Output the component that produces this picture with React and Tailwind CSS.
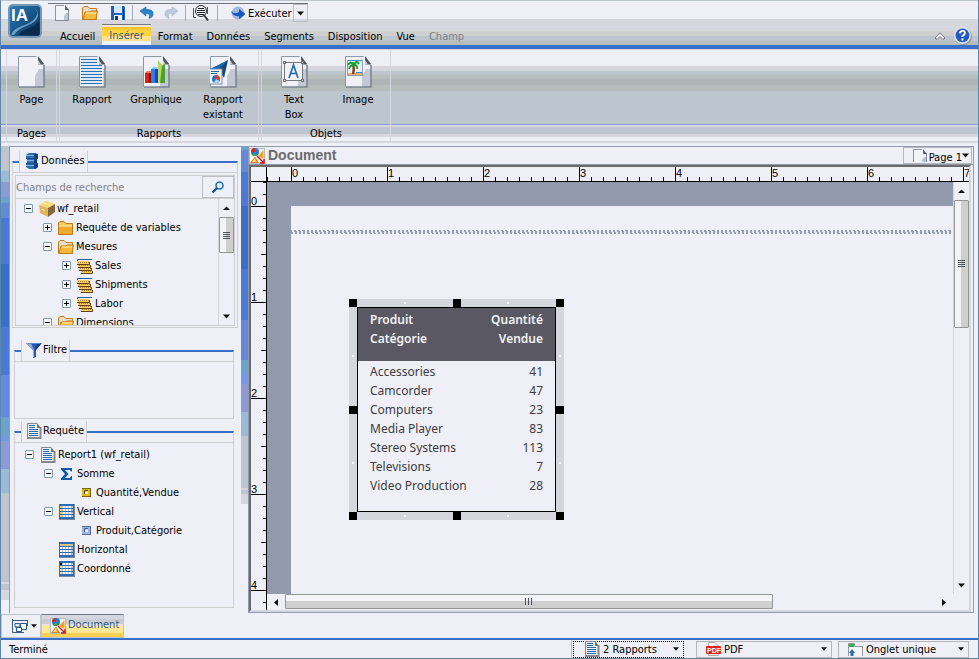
import React, { useEffect, useRef, useState } from "react";

const tabs = ["Accueil", "Insérer", "Format", "Données", "Segments", "Disposition", "Vue", "Champ"];

const reportRows = [
  ["Accessories", 41],
  ["Camcorder", 47],
  ["Computers", 23],
  ["Media Player", 83],
  ["Stereo Systems", 113],
  ["Televisions", 7],
  ["Video Production", 28],
];

const dataTree = [
  { label: "wf_retail", level: 0, icon: "cube", open: true },
  { label: "Requête de variables", level: 1, icon: "folder", open: false },
  { label: "Mesures", level: 1, icon: "folderOpen", open: true },
  { label: "Sales", level: 2, icon: "measure", open: false },
  { label: "Shipments", level: 2, icon: "measure", open: false },
  { label: "Labor", level: 2, icon: "measure", open: false },
  { label: "Dimensions", level: 1, icon: "folderOpen", open: true },
];

const queryTree = [
  { label: "Report1 (wf_retail)", level: 0, icon: "report", open: true },
  { label: "Somme", level: 1, icon: "sigma", open: true },
  { label: "Quantité,Vendue", level: 2, icon: "fieldYellow" },
  { label: "Vertical", level: 1, icon: "gridVertical", open: true },
  { label: "Produit,Catégorie", level: 2, icon: "fieldBlue" },
  { label: "Horizontal", level: 1, icon: "gridHorizontal" },
  { label: "Coordonné", level: 1, icon: "gridCoord" },
];

const indent = ["pl-0", "pl-[19px]", "pl-[38px]"];

/* ---------- icons ---------- */

const PageShape = ({ children, className = "w-[27px] h-8" }) => (
  <svg viewBox="0 0 27 32" className={className} aria-hidden="true">
    <path d="M1 1H19L26 9V31H1Z" fill="#f1f1f8" />
    <path d="M17 31V20L21 13H26V31Z" fill="#c3c9d4" />
    <path d="M.5 31V.5H18.5" fill="none" stroke="#8d97a8" />
    <path d="M1 31H26V9" fill="none" stroke="#7d8594" strokeWidth="1.6" />
    <path d="M20 0L26.5 8.5H20Z" fill="#4e545e" />
    <path d="M20 4L23 8.5H20Z" fill="#c8ccd4" />
    {children}
  </svg>
);

const SmallPage = () => (
  <svg viewBox="0 0 14 16" className="h-4 w-[14px]" aria-hidden="true">
    <path d="M0 0H10L13 4V16H0Z" fill="#f3f4fa" />
    <path d="M9 16V11L11 8H13V16Z" fill="#bcc4d0" />
    <path d="M.5 16V.5H9" fill="none" stroke="#9096a0" />
    <path d="M0 15.5H13.5V4" fill="none" stroke="#858b96" />
    <path d="M10 0L14 5H10Z" fill="#5e646e" />
  </svg>
);

const ReportPage = ({ className }) => (
  <PageShape className={className}>
    <path d="M2 2H18V10H24V30H2Z" fill="#f4f5fb" />
    {[3.5, 6.5, 9.5, 12.5, 15.5, 18.5, 21.5, 24.5, 27.5].map((y) => (
      <path key={y} d={`M2 ${y}H${y < 9 ? 18 : 23}`} stroke="#2474b8" strokeWidth="1.2" />
    ))}
  </PageShape>
);

const SmallReport = () => (
  <svg viewBox="0 0 16 16" className="size-4" aria-hidden="true">
    <path d="M1 0H11L15 4V16H1Z" fill="#f3f4fa" />
    <path d="M1.5 15V.5H11" fill="none" stroke="#84898c" />
    <path d="M1 15H14.5V4" fill="none" stroke="#84898c" strokeWidth="2" />
    <path d="M11 0L15 5H11Z" fill="#6f7478" />
    <path d="M3 2.5H9M3 4.5H9M3 6.5H12M3 8.5H12M3 10.5H12M3 12.5H12" stroke="#1f69b3" />
  </svg>
);

const GraphPage = () => (
  <PageShape>
    <rect x="2" y="17" width="6" height="10" fill="#d8210f" />
    <path d="M2 17L4 15H9L8 17Z" fill="#f0784a" />
    <rect x="6" y="17" width="2" height="10" fill="#7c1008" />
    <rect x="8" y="13" width="6" height="14" fill="#2f7ef0" />
    <path d="M8 13L10 11H15L14 13Z" fill="#8fc4ff" />
    <rect x="12" y="13" width="3" height="14" fill="#1d44c0" />
    <path d="M15 4L20 10L22 8V27H15Z" fill="#b5d85c" />
    <path d="M19 10L22 8V27H17Z" fill="#4aa232" />
  </PageShape>
);

const ExistingPage = () => (
  <PageShape>
    <path d="M0 13L18 4L12 20L9 13Z" fill="#1d67ae" />
    <path d="M9 13L18 4L14 22Z" fill="#17466f" />
    <rect x="-1" y="13" width="13" height="15" fill="#f3f4fa" stroke="#6d8fb4" />
    <path d="M1 15.5H9M1 17.5H7" stroke="#1f69b3" />
    <circle cx="6" cy="23" r="4" fill="#2a6fd6" />
    <path d="M6 23V19A4 4 0 0 1 9.5 25Z" fill="#e2401c" />
    <path d="M6 23L9.5 25A4 4 0 0 1 4 26.5Z" fill="#a8d8ea" />
  </PageShape>
);

const TextPage = () => (
  <PageShape>
    <rect x="3.5" y="6.5" width="18" height="18" fill="#f1f1f8" stroke="#74787c" />
    {[[2.5, 5.5], [20.5, 5.5], [2.5, 23.5], [20.5, 23.5]].map(([x, y]) => (
      <rect key={`${x}-${y}`} x={x} y={y} width="2" height="2" fill="#fff" stroke="#74787c" />
    ))}
    <path d="M8 22L12.5 9L17 22M9.5 17.5H15.5" fill="none" stroke="#1f69b3" strokeWidth="1.6" />
  </PageShape>
);

const ImagePage = () => (
  <PageShape>
    <rect x="2.5" y="4.5" width="15" height="15" fill="#e9eef8" stroke="#8ba0b4" />
    <rect x="3" y="4" width="14" height="1" fill="#3f8fd0" />
    <path d="M3 17H17V19H3Z" fill="#e0b060" />
    <path d="M11 16H17V17H11Z" fill="#3f8fd0" />
    <path d="M8 18Q9.5 12 8 9" fill="none" stroke="#8a3a12" strokeWidth="2.4" />
    <path d="M3 9Q5 5 9 8Q12 4 14 8M4 13Q5 9 9 9Q13 9 12 13M5 6L9 9L12 5" fill="none" stroke="#19a030" strokeWidth="1.8" />
  </PageShape>
);

const Logo = () => (
  <svg viewBox="0 0 34 34" className="size-[34px]" aria-hidden="true">
    <defs>
      <linearGradient id="logo" x1="0" y1="0" x2="1" y2="1">
        <stop offset="0" stopColor="#2f7fb8" />
        <stop offset=".55" stopColor="#145388" />
        <stop offset="1" stopColor="#0b2a4c" />
      </linearGradient>
    </defs>
    <rect x="1" y="1" width="32" height="32" rx="4" fill="url(#logo)" stroke="#7797b3" strokeWidth="2" />
    <path d="M24 3Q32 7 28 13Q24 19 14 22Q5 25 3 31H6Q10 25 18 22Q29 18 30 12Q31 6 24 3Z" fill="#8fb8d4" opacity=".75" />
    <path d="M31 17Q28 22 19 25Q12 27 11 31H31Z" fill="#0b2b4e" />
    <text x="3" y="17" fontFamily="Liberation Sans, sans-serif" fontWeight="bold" fontSize="17" fill="#fff">IA</text>
  </svg>
);

const FolderIcon = ({ open }) => (
  <svg viewBox="0 0 16 16" className="size-4" aria-hidden="true">
    <path d="M.5 14.5V3L2 1.5H6L8 3.5H14.5V14.5Z" fill={open ? "#e9dcc4" : "#f4c558"} stroke="#c47a1a" />
    {open ? (
      <path d="M3 7H8L9 6H15.5L14 14.5H1Z" fill="#f5b93c" stroke="#c47a1a" />
    ) : (
      <path d="M1 6H14V14H1Z" fill="#f0ab2c" />
    )}
    <path d={open ? "M4 8H14" : "M1 6H14"} stroke="#fff0b8" />
  </svg>
);

const GridIcon = ({ mode }) => (
  <svg viewBox="0 0 16 16" className="size-4" aria-hidden="true">
    <rect x="0" y="0" width="16" height="16" fill="#7c8a98" />
    <rect x="0" y="0" width="15" height="15" fill="#2a6db4" />
    {[0, 1, 2, 3].map((r) =>
      [0, 1, 2, 3].map((c) => {
        let fill = "#f6f7fc";
        if (mode === "vertical" && c === 0) fill = "#f5cc3c";
        if (mode === "horizontal" && r === 0) fill = "#f5cc3c";
        if (mode === "coord" && c === 0) fill = r === 0 ? "#000" : "#f5dc90";
        return (
          <g key={`${r}${c}`}>
            <rect x={1 + c * 3} y={2 + r * 3} width="4" height="2" fill="#b4bccf" />
            <rect x={1 + c * 3} y={2 + r * 3} width="2" height="2" fill={fill} />
          </g>
        );
      })
    )}
  </svg>
);

const icons = {
  cube: (
    <svg viewBox="0 0 16 16" className="size-4" aria-hidden="true">
      <path d="M0 4L7 0L16 3L9 7Z" fill="#f3d873" />
      <path d="M0 4L9 7V16L1 12Z" fill="#e2b65c" />
      <path d="M9 7L16 3V11L9 16Z" fill="#86663a" />
      <path d="M5 2L12 5M3 8L6 10" stroke="#fff0b0" />
    </svg>
  ),
  folder: <FolderIcon />,
  folderOpen: <FolderIcon open />,
  measure: (
    <svg viewBox="0 0 16 16" className="size-4" aria-hidden="true">
      <path d="M.5 4V1.5H15" fill="none" stroke="#1d5c98" />
      <path d="M0 3H12V6H0ZM1 6H13V9H1ZM2 9H14V12H2ZM4 12H15V15H4Z" fill="#f5cf62" />
      <path d="M0 6.5H12.5V4M1 9.5H13.5V7M2 12.5H14.5V10M4 15.5H15.5V13" fill="none" stroke="#664014" />
      <path d="M1 4.5H12M2 7.5H13M3 10.5H14M5 13.5H15" stroke="#a87a2c" strokeDasharray="1 1" />
    </svg>
  ),
  report: <SmallReport />,
  sigma: (
    <svg viewBox="0 0 16 16" className="size-4" aria-hidden="true">
      <path d="M2 2H13V5.5H12L11 4H6L9.5 8L6 12H11L12 10H13V14H2V12.5L6 8L2 3.5Z" fill="#0b5cab" />
    </svg>
  ),
  fieldYellow: (
    <svg viewBox="0 0 9 9" className="size-[9px]" aria-hidden="true">
      <path d="M0 0H9V9H0Z" fill="#7b6314" />
      <path d="M0 1H8V8H0Z" fill="#dcb926" />
      <path d="M3 4L6 3V6H3Z" fill="#fff29c" />
      <path d="M2.5 6V2.5H6" fill="none" stroke="#5a4708" />
    </svg>
  ),
  fieldBlue: (
    <svg viewBox="0 0 9 9" className="size-[9px]" aria-hidden="true">
      <path d="M0 0H9V9H0Z" fill="#56699a" />
      <path d="M0 1H8V8H0Z" fill="#9db6e0" />
      <path d="M3 4L6 3V6H3Z" fill="#e4eefc" />
      <path d="M2.5 6V2.5H6" fill="none" stroke="#4a5f94" />
    </svg>
  ),
  gridVertical: <GridIcon mode="vertical" />,
  gridHorizontal: <GridIcon mode="horizontal" />,
  gridCoord: <GridIcon mode="coord" />,
};

const DatabaseIcon = () => (
  <svg viewBox="0 0 16 16" className="size-4" aria-hidden="true">
    <path d="M2 2L5 0H12L14 2V5L13 6V10L14 11V14L12 16H5L2 14V11L3 10V6L2 5Z" fill="#2a6db4" />
    <path d="M10 1H14V5L13 6V10L14 11V14L10 16Z" fill="#143f73" />
    <path d="M2 2.5H10M3 7.5H10M2 12.5H10" stroke="#7ab4e6" />
    <path d="M2 5.5H14M2 10.5H14" stroke="#1d4f86" />
  </svg>
);

const FunnelIcon = () => (
  <svg viewBox="0 0 16 16" className="size-4" aria-hidden="true">
    <path d="M0 1H16L10 8V15L7 16V8Z" fill="#2458c0" />
    <path d="M0 1H5L8 8V15L7 15V8Z" fill="#94a8c8" />
    <path d="M11 2H15L9 9Z" fill="#173a78" />
    <path d="M2 1.5H14" stroke="#5c86cc" />
  </svg>
);

const DocIcon = () => (
  <svg viewBox="0 0 16 16" className="size-4 shrink-0" aria-hidden="true">
    <rect x=".5" y=".5" width="15" height="15" fill="#f5f5fa" stroke="#b4b8c0" />
    <circle cx="6" cy="4" r="4" fill="#2c74d8" />
    <path d="M6 4H2A4 4 0 0 1 6 0Z" fill="#d83018" />
    <path d="M6 4L3 7A4 4 0 0 0 8 7Z" fill="#3aa64a" />
    <path d="M9 8L14.5 2V11Z" fill="#f0a41c" />
    <path d="M1 15L6 8.5L10 15Z" fill="#d48a14" />
    <path d="M3 14L6 10L7 14Z" fill="#ffdc70" />
    <path d="M8 8L15 15M15 11V15H11" fill="none" stroke="#cf1414" strokeWidth="1.4" />
  </svg>
);

const ArrowIcon = ({ dir = "down", className = "size-[7px]" }) => {
  const d = { down: "M0 1.5H7L3.5 5.5Z", up: "M0 5H7L3.5 1.5Z", left: "M5 0V7L1 3.5Z", right: "M1 0V7L5 3.5Z" }[dir];
  return (
    <svg viewBox="0 0 7 7" className={`pointer-events-none shrink-0 ${className}`} aria-hidden="true">
      <path d={d} fill="#111" />
    </svg>
  );
};

/* ---------- ribbon ---------- */

const QuickButton = ({ label, children }) => (
  <button type="button" aria-label={label} className="flex h-[18px] w-7 items-center justify-center">
    {children}
  </button>
);

const QuickBar = () => (
  <div className="flex h-[19px] w-fit items-center border-t border-[#6f737b]">
    <QuickButton label="Nouveau">
      <SmallPage />
    </QuickButton>
    <QuickButton label="Ouvrir">
      <FolderIcon open />
    </QuickButton>
    <QuickButton label="Enregistrer">
      <svg viewBox="0 0 16 16" className="size-4" aria-hidden="true">
        <path d="M1 1H14L15 2V15H1Z" fill="#1d62b8" />
        <path d="M4 1H12V8H4Z" fill="#d4e6f8" />
        <path d="M4 10H12V15H4Z" fill="#f2f4fb" />
        <path d="M5 11H8V15H5Z" fill="#173a66" />
        <path d="M13.5 4V15" stroke="#0d3c7a" />
      </svg>
    </QuickButton>
    <span className="mr-[2px] h-4 w-px bg-[#a4acbc]" />
    <button type="button" aria-label="Annuler" className="flex h-[18px] w-6 items-center justify-center">
      <svg viewBox="0 0 14 12" className="h-3 w-[14px]" aria-hidden="true">
        <path d="M0 4L6 0V2.5Q14 2 13 8Q12 11 9 11.5Q11 6 6 6.5V9Z" fill="#2785cf" stroke="#155b9c" strokeWidth=".6" />
      </svg>
    </button>
    <button type="button" aria-label="Rétablir" disabled className="flex h-[18px] w-6 items-center justify-center">
      <svg viewBox="0 0 14 12" className="h-3 w-[14px]" aria-hidden="true">
        <path d="M14 4L8 0V2.5Q0 2 1 8Q2 11 5 11.5Q3 6 8 6.5V9Z" fill="#bccbdc" stroke="#a6b6c8" strokeWidth=".6" />
      </svg>
    </button>
    <span className="ml-[2px] mr-px h-4 w-px bg-[#a4acbc]" />
    <QuickButton label="Aperçu">
      <svg viewBox="0 0 16 16" className="size-4" aria-hidden="true">
        <path d="M.5 3V12.5H3M14.5 9V2" fill="none" stroke="#555" />
        <circle cx="8" cy="6" r="5.5" fill="#f7f8fc" stroke="#20242a" />
        <path d="M5 3.5H11M4 5.5H12M4 7.5H12M5 9.5H11" stroke="#20242a" />
        <path d="M11 10L15 15.5" stroke="#383c44" strokeWidth="2" />
      </svg>
    </QuickButton>
    <span className="ml-[2px] h-4 w-px bg-[#a4acbc]" />
    <button type="button" className="ml-3 flex h-[18px] items-center gap-[2px] pr-px">
      <svg viewBox="0 0 16 14" className="h-[14px] w-4" aria-hidden="true">
        <circle cx="8" cy="7" r="6.5" fill="#9fb9e2" />
        <path d="M1 5Q5 9 9 6V3L15.5 8L9 13V10Q3 11 1 5Z" fill="#1656bd" />
      </svg>
      <span className="pt-px">Exécuter</span>
    </button>
    <button
      type="button"
      aria-label="Options d'exécution"
      className="flex h-[18px] w-[15px] items-center justify-center border border-[#b9bdc6]"
    >
      <ArrowIcon />
    </button>
  </div>
);

const RibbonButton = ({ icon, label }) => (
  <button type="button" className="flex w-16 flex-col items-center gap-1 text-center leading-[15px]">
    {icon}
    <span className="flex w-12 justify-center">{label}</span>
  </button>
);

const RibbonGroup = ({ title, children }) => (
  <section className="flex flex-col border-r border-[#d6d7de]">
    <div className="flex h-[74px] shrink-0 pt-[6px]">{children}</div>
    <h2 className="pt-[2px] text-center leading-4">{title}</h2>
  </section>
);

const Ribbon = () => (
  <div className="flex h-[93px] border-b-2 border-[#d6d7de] bg-[linear-gradient(#efeff7_16px,#d6d7de_16px_21px,#bdc5ce_21px_25px,#b5beba_25px_29px,#adb6b5_29px_35px,#b5beba_35px_41px,#bdc5ce_41px_74px,#8c9ad6_74px_75px,#d6d7de_75px_77px,#bdc5ce_77px_84px,#d6d7de_84px_87px,#efeff7_87px)] pl-[5px]">
    <div className="flex border-l border-[#d6d7de]">
      <RibbonGroup title="Pages">
        <div className="flex w-[49px] justify-center">
          <RibbonButton icon={<PageShape />} label="Page" />
        </div>
      </RibbonGroup>
      <div className="ml-[2px] flex border-l border-[#d6d7de]">
        <RibbonGroup title="Rapports">
          <RibbonButton icon={<ReportPage />} label="Rapport" />
          <RibbonButton icon={<GraphPage />} label="Graphique" />
          <div className="flex w-[70px] justify-center">
            <RibbonButton icon={<ExistingPage />} label="Rapport existant" />
          </div>
        </RibbonGroup>
      </div>
      <div className="ml-[2px] flex border-l border-[#d6d7de]">
        <RibbonGroup title="Objets">
          <RibbonButton icon={<TextPage />} label={<>Text<br />Box</>} />
          <RibbonButton icon={<ImagePage />} label="Image" />
        </RibbonGroup>
      </div>
    </div>
  </div>
);

const Header = ({ active, onSelect }) => (
  <header className="flex h-[49px] border-t border-b-4 border-t-[#bdc5ce] border-b-[#396fc6] bg-[linear-gradient(#efeff7_18px,#d6d7de_18px_30px,#cecfce_30px_35px,#bdc5ce_35px_40px,#b5beba_40px)] pl-[7px]">
    <div className="pt-[3px]">
      <Logo />
    </div>
    <div className="flex flex-1 flex-col justify-between pl-[6px] pt-[2px]">
      <QuickBar />
      <nav className="flex h-[21px] pl-[5px]">
        {tabs.map((tab) => (
          <button
            key={tab}
            type="button"
            onClick={() => onSelect(tab)}
            disabled={tab === "Champ"}
            className={
              tab === active
                ? "border-t border-[#73798c] bg-[linear-gradient(#f2ead0_2px,#f7c631_2px_5px,#ffd340_5px_11px,#ffe38c_11px_16px,#efeff7_16px)] px-[7px] pt-px text-[#31598c]"
                : "px-[7px] pt-1 disabled:text-[#7b7f88]"
            }
          >
            {tab}
          </button>
        ))}
      </nav>
    </div>
    <div className="flex items-end gap-2 pr-[6px]">
      <button type="button" aria-label="Réduire le ruban" className="pb-1">
        <svg viewBox="0 0 12 10" className="h-[10px] w-3" aria-hidden="true">
          <path d="M1 7L6 2L11 7L9 8.5L6 5.5L3 8.5Z" fill="#f4f4fa" stroke="#62666e" strokeWidth=".9" />
        </svg>
      </button>
      <button type="button" aria-label="Aide">
        <svg viewBox="0 0 17 17" className="size-[18px]" aria-hidden="true">
          <circle cx="9" cy="9" r="8" fill="#8d949c" />
          <circle cx="8" cy="8" r="8" fill="#dfe5f0" />
          <circle cx="8" cy="8" r="6.5" fill="#2259c4" />
          <path d="M5.5 6Q6 3.5 8.5 3.7Q11 4.3 10 6.7L8 8.5V9.5" fill="none" stroke="#fff" strokeWidth="1.8" />
          <rect x="7" y="10.8" width="2" height="2" fill="#fff" />
        </svg>
      </button>
    </div>
  </header>
);

/* ---------- left side ---------- */

const GroupBox = ({ icon, title, className, bodyClass, children }) => (
  <section className={`flex flex-col ${className}`}>
    <div className="flex h-[21px] items-end">
      <span className="h-[11px] w-[7px] border-l border-t-2 border-l-[#cecfce] border-t-[#396fc6]" />
      <h2 className="flex h-[21px] items-center gap-px border-x border-[#cecfce] pl-1 pr-[2px] pb-[2px]">
        {icon}
        {title}
      </h2>
      <span className="h-[11px] flex-1 border-r border-t-2 border-r-[#cecfce] border-t-[#396fc6]" />
    </div>
    <div className={`border border-[#cecfce] ${bodyClass}`}>{children}</div>
  </section>
);

const Expander = ({ open, label }) => (
  <button
    type="button"
    aria-label={label}
    aria-expanded={open}
    className="flex size-[9px] shrink-0 items-center justify-center rounded-[1px] border border-[#7b9aad] bg-[#f7f7fa]"
  >
    <svg viewBox="0 0 7 7" className="size-[7px]" aria-hidden="true">
      <path d={open ? "M1 3.5H6" : "M1 3.5H6M3.5 1V6"} stroke="#000" />
    </svg>
  </button>
);

const Tree = ({ items, className }) => (
  <ul className={className}>
    {items.map((item) => (
      <li key={item.label} className={`flex h-[19px] items-center whitespace-nowrap ${indent[item.level]}`}>
        {item.open === undefined ? <span className="w-[9px] shrink-0" /> : <Expander open={item.open} label={item.label} />}
        <span className="ml-[6px] mr-[2px] flex w-4 shrink-0 justify-center">{icons[item.icon]}</span>
        {item.label}
      </li>
    ))}
  </ul>
);

const ScrollButton = ({ dir, label, className }) => (
  <button type="button" aria-label={label} className={`flex shrink-0 items-center justify-center ${className}`}>
    <ArrowIcon dir={dir} />
  </button>
);

const VerticalThumb = ({ className }) => (
  <div
    className={`flex flex-col items-center justify-center gap-px rounded-[1px] border border-[#949694] bg-[linear-gradient(to_right,#f3f3f8_50%,#cecfce_50%)] ${className}`}
  >
    <span className="h-px w-[7px] bg-[#4c525c]" />
    <span className="h-px w-[7px] bg-[#4c525c]" />
    <span className="h-px w-[7px] bg-[#4c525c]" />
    <span className="h-px w-[7px] bg-[#4c525c]" />
  </div>
);

const DataPanel = () => (
  <GroupBox icon={<DatabaseIcon />} title="Données" className="mr-[3px] ml-[2px]" bodyClass="p-[2px] pb-[1px]">
    <div className="flex h-6 border border-[#cecfce]">
      <input
        type="text"
        aria-label="Champs de recherche"
        placeholder="Champs de recherche"
        className="min-w-0 flex-1 bg-transparent pt-px placeholder:text-[#7e8288] outline-none"
      />
      <button type="button" aria-label="Rechercher" className="flex w-8 items-center justify-center border border-[#bdbfc0]">
        <svg viewBox="0 0 14 13" className="h-[13px] w-[14px]" aria-hidden="true">
          <circle cx="8.5" cy="4.5" r="3.5" fill="#e6f0fc" stroke="#2170bd" strokeWidth="1.6" />
          <path d="M6 7L1.5 11.5" stroke="#1b4f88" strokeWidth="2.4" />
        </svg>
      </button>
    </div>
    <div className="flex h-[127px] border border-t-0 border-[#cecfce]">
      <Tree items={dataTree} className="flex-1 overflow-hidden pl-2" />
      <div className="flex w-4 flex-col border-l border-[#d6d7de]">
        <ScrollButton dir="up" label="Défiler vers le haut" className="h-[18px]" />
        <VerticalThumb className="h-9" />
        <div className="flex-1" />
        <ScrollButton dir="down" label="Défiler vers le bas" className="h-[18px]" />
      </div>
    </div>
  </GroupBox>
);

const SidePanel = () => (
  <aside className="flex w-[232px] shrink-0 flex-col border-l border-t border-[#949aad] pt-1">
    <DataPanel />
    <GroupBox icon={<FunnelIcon />} title="Filtre" className="ml-1 mr-[7px] mt-3" bodyClass="h-[58px]" />
    <GroupBox icon={<SmallReport />} title="Requête" className="mt-[2px] mb-[5px] ml-1 mr-[7px] flex-1" bodyClass="flex-1">
      <Tree items={queryTree} className="pl-[10px] pt-[2px]" />
    </GroupBox>
  </aside>
);

/* ---------- document ---------- */

const INCH = 96;

// how many inches of ruler fit in the element
const useRulerLength = (side, origin) => {
  const ref = useRef(null);
  const [count, setCount] = useState(1);

  useEffect(() => {
    const observer = new ResizeObserver(([entry]) => {
      setCount(Math.ceil((entry.contentRect[side] - origin) / INCH));
    });
    observer.observe(ref.current);
    return () => observer.disconnect();
  }, [side, origin]);

  return {
    ref,
    units: Array.from({ length: count }, (_, i) => i),
    ticks: Array.from({ length: (count + 1) * 8 }, (_, i) => i - 2),
  };
};

const HorizontalRuler = () => {
  const { ref, units, ticks } = useRulerLength("width", 42);
  return (
    <svg ref={ref} className="h-[15px] w-full border-b border-black" fontFamily="Liberation Sans, sans-serif" fontSize="11" aria-hidden="true">
      {ticks.map((t) => (
        <path key={t} d={`M${40.5 + t * 12} ${t % 8 === 0 ? 0 : 10}V14`} stroke="#000" />
      ))}
      <path d="M15.5 0V14" stroke="#000" />
      {units.map((u) => (
        <text key={u} x={41 + u * INCH} y="10">{u}</text>
      ))}
    </svg>
  );
};

const VerticalRuler = () => {
  const { ref, units, ticks } = useRulerLength("height", 24);
  return (
    <svg ref={ref} className="w-4 shrink-0 border-r border-black" fontFamily="Liberation Sans, sans-serif" fontSize="11" aria-hidden="true">
      {ticks.map((t) => (
        <path key={t} d={`M${t % 8 === 0 ? 0 : t % 4 === 0 ? 10 : 12} ${24.5 + t * 12}H16`} stroke="#000" />
      ))}
      {units.map((u) => (
        <text key={u} x="0" y={23 + u * INCH}>{u}</text>
      ))}
    </svg>
  );
};

const Report = () => (
  <div className="absolute left-[82px] top-[117px] w-[215px] bg-[#d6d7de] p-2">
    <table className="w-full border border-black bg-[#efeff7] font-['Noto_Sans',sans-serif] text-xs text-[#3c3c40]">
      <thead className="bg-[#5a5963] text-[#f2f2f6]">
        <tr className="h-[53px] align-top leading-[19px]">
          <th className="pl-3 pt-[2px] text-left font-semibold">Produit<br />Catégorie</th>
          <th className="pr-3 pt-[2px] text-right font-semibold">Quantité<br />Vendue</th>
        </tr>
      </thead>
      <tbody className="leading-[19px]">
        <tr className="h-px"><td colSpan="2" /></tr>
        {reportRows.map(([name, qty]) => (
          <tr key={name}>
            <td className="pl-3">{name}</td>
            <td className="pr-3 text-right">{qty}</td>
          </tr>
        ))}
        <tr className="h-[17px]"><td colSpan="2" /></tr>
      </tbody>
    </table>
    <span className="absolute left-0 top-0 size-2 bg-black" />
    <span className="absolute left-[104px] top-0 size-2 bg-black" />
    <span className="absolute right-0 top-0 size-2 bg-black" />
    <span className="absolute left-0 top-[107px] size-2 bg-black" />
    <span className="absolute right-0 top-[107px] size-2 bg-black" />
    <span className="absolute bottom-0 left-0 size-2 bg-black" />
    <span className="absolute bottom-0 left-[104px] size-2 bg-black" />
    <span className="absolute bottom-0 right-0 size-2 bg-black" />
    <span className="absolute left-[55px] top-[3px] size-[2px] bg-[#f7f7fa]" />
    <span className="absolute right-[55px] top-[3px] size-[2px] bg-[#f7f7fa]" />
    <span className="absolute bottom-[3px] left-[55px] size-[2px] bg-[#f7f7fa]" />
    <span className="absolute bottom-[3px] right-[55px] size-[2px] bg-[#f7f7fa]" />
    <span className="absolute left-[3px] top-14 size-[2px] bg-[#f7f7fa]" />
    <span className="absolute right-[3px] top-14 size-[2px] bg-[#f7f7fa]" />
    <span className="absolute bottom-14 left-[3px] size-[2px] bg-[#f7f7fa]" />
    <span className="absolute bottom-14 right-[3px] size-[2px] bg-[#f7f7fa]" />
  </div>
);

const DocumentPanel = () => (
  <main className="mr-1 flex min-w-0 flex-1 flex-col border border-[#949aad]">
    <div className="flex h-[18px] items-center border-b border-[#949aad]">
      <DocIcon />
      <h1 className="flex-1 pb-[2px] pl-[3px] font-['Liberation_Sans',Arial,sans-serif] text-sm/4 font-bold text-[#6b6b6b]">Document</h1>
      <button
        type="button"
        aria-haspopup="menu"
        className="mr-px flex h-[17px] w-[69px] items-center justify-end border border-[#b5b7bd] pr-[2px]"
      >
        <span className="mr-[2px] h-[13px] overflow-hidden"><SmallPage /></span>
        <span className="pt-1">Page 1</span>
        <ArrowIcon />
      </button>
    </div>
    <div className="mr-[2px] flex flex-1 flex-col border-2 border-b-[#d6d7de] border-l-[#6b6b6b] border-r-[#d6d7de] border-t-[#6b6b6b]">
      <HorizontalRuler />
      <div className="flex flex-1">
        <VerticalRuler />
        <div className="flex min-w-0 flex-1 flex-col">
          <div className="flex flex-1">
            <div className="relative flex flex-1 overflow-hidden bg-[#949aad] pl-6 pt-6">
              <div className="flex-1 bg-[#efeff7] pt-6">
                <div className="h-1 bg-[repeating-linear-gradient(75deg,#949aad_0_2px,#efeff7_2px_4px)]" />
              </div>
              <Report />
            </div>
            <div className="flex w-4 flex-col border-l border-[#d6d7de]">
              <ScrollButton dir="up" label="Défiler vers le haut" className="h-[18px]" />
              <div className="flex-1">
                <VerticalThumb className="h-[34%]" />
              </div>
              <ScrollButton dir="down" label="Défiler vers le bas" className="h-[18px]" />
            </div>
          </div>
          <div className="flex h-4">
            <ScrollButton dir="left" label="Défiler à gauche" className="w-[18px]" />
            <div className="flex-1">
              <div className="flex h-[15px] w-3/4 items-center justify-center gap-[2px] rounded-[1px] border border-[#949694] bg-[linear-gradient(#f3f3f8_50%,#cecfce_50%)]">
                <span className="h-[7px] w-px bg-[#4c525c]" />
                <span className="h-[7px] w-px bg-[#4c525c]" />
                <span className="h-[7px] w-px bg-[#4c525c]" />
              </div>
            </div>
            <ScrollButton dir="right" label="Défiler à droite" className="mr-4 w-[18px]" />
          </div>
        </div>
      </div>
    </div>
  </main>
);

/* ---------- bottom ---------- */

const StatusSelect = ({ label, icon, options, className }) => (
  <label className={`flex h-[17px] items-center pr-1 ${className}`}>
    {icon}
    <select aria-label={label} className="min-w-0 flex-1 appearance-none bg-transparent pl-[3px] pt-px outline-none">
      {options.map((o) => (
        <option key={o}>{o}</option>
      ))}
    </select>
    <ArrowIcon className="size-[6px]" />
  </label>
);

const StatusBar = () => (
  <footer className="flex h-[21px] items-center border-t-2 border-b border-b-[#5b8596] border-t-[#396fc6]">
    <p className="flex-1 pl-2 pt-px">Terminé</p>
    <div className="flex h-full items-center border-l border-[#b5b7bd] pl-px">
      <StatusSelect
        label="Rapports"
        icon={<SmallReport />}
        options={["2 Rapports"]}
        className="w-[111px] border border-dotted border-black pl-[10px]"
      />
    </div>
    <StatusSelect
      label="Format de sortie"
      icon={
        <svg viewBox="0 0 15 14" className="h-[14px] w-[15px]" aria-hidden="true">
          <path d="M2.5 .5H9L12.5 4V13.5H2.5Z" fill="#f5f5fa" stroke="#b0aeb0" />
          <rect x="0" y="4" width="15" height="8" rx="1" fill="#e02020" />
          <text x="1" y="11" fontFamily="Liberation Sans, sans-serif" fontSize="7" fontWeight="bold" fill="#fff">PDF</text>
        </svg>
      }
      options={["PDF", "HTML", "Excel"]}
      className="ml-3 w-[136px] border border-[#b5b7bd] pl-[9px]"
    />
    <StatusSelect
      label="Sortie"
      icon={
        <svg viewBox="0 0 15 13" className="h-[13px] w-[15px]" aria-hidden="true">
          <path d="M.5 13V.5H6.5V3.5H14.5V13" fill="#f5f5fa" stroke="#9498a0" />
          <rect x="1" y="1" width="5" height="3" fill="#28b84a" />
          <path d="M4 6L7 10H5.5V13H2.5V10H1Z" fill="#2a6db4" />
        </svg>
      }
      options={["Onglet unique"]}
      className="mr-[9px] ml-[6px] w-[131px] border border-[#b5b7bd] pl-[9px]"
    />
  </footer>
);

const TaskTabs = () => (
  <div className="flex h-6 items-stretch">
    <button
      type="button"
      aria-label="Fenêtres"
      aria-haspopup="menu"
      className="flex w-10 items-center gap-[3px] border border-[#bdc5ce] pl-[10px]"
    >
      <svg viewBox="0 0 16 16" className="size-4 shrink-0" aria-hidden="true">
        <path d="M1 2.5H15M.5 1V14.5H12M15.5 2V8" fill="none" stroke="#3a5c84" />
        <path d="M3 5.5H8V9H3Z" fill="#dce6f2" stroke="#3a5c84" />
        <path d="M8.5 5.5H14.5V11.5H8.5Z" fill="#fff" stroke="#24548c" />
        <path d="M4.5 9.5H9.5V13.5H4.5Z" fill="#fff" stroke="#24548c" />
      </svg>
      <ArrowIcon className="size-[6px]" />
    </button>
    <button
      type="button"
      className="flex items-center gap-[2px] border border-[#bdc5ce] border-t-[#73798c] bg-[linear-gradient(#d6d7de_4px,#c9ccd2_4px_9px,#e6e4dc_9px_11px,#ffe794_11px_18px,#f7cf52_18px)] pl-2 pr-1 text-[#31598c]"
    >
      <DocIcon />
      <span className="pb-[2px]">Document</span>
    </button>
  </div>
);

export default function App() {
  const [active, setActive] = useState("Insérer");

  return (
    <div className="flex min-h-screen flex-col border-x border-[#5f86a8] bg-[#efeff7] font-['DejaVu_Sans_Condensed','Noto_Sans',sans-serif] text-[11px] leading-4 text-black">
      <Header active={active} onSelect={setActive} />
      <div className="h-px bg-[#d6d7de]" />
      <Ribbon />
      <div className="flex flex-1 pb-[1px] pt-[3px]">
        <div className="w-2 shrink-0 bg-[linear-gradient(#bdc5ce_25px,#9cbad6_25px_36px,#8c9ad6_36px_51px,#6ba2ce_51px_57px,#638ad6_57px_72px,#4a79d6_72px_118px,#396fc6_118px_181px,#4a79d6_181px_229px,#638ade_229px_271px,#6ba2ce_271px_291px,#739ae7_291px_295px,#8c9ad6_295px_323px,#9cbad6_323px_347px,#bdc5ce_347px_436px,#d6d7de_436px_438px,#bdc5ce_438px_444px,#d6d7de_444px_454px,#efeff7_454px)]" />
        <SidePanel />
        <div className="w-[7px] shrink-0 bg-[linear-gradient(#6ba2ce_4px,#638ad6_4px_26px,#4a79d6_26px_60px,#396fc6_60px_123px,#4a79d6_123px_174px,#638ad6_174px_214px,#6ba2ce_214px_226px,#739ae7_226px_238px,#8c9ad6_238px_266px,#9cbad6_266px_290px,#bdc5ce_290px_342px,#d6d7de_342px_344px,#bdc5ce_344px_348px,#d6d7de_348px_358px,#efeff7_358px)]" />
        <DocumentPanel />
      </div>
      <TaskTabs />
      <StatusBar />
    </div>
  );
}
